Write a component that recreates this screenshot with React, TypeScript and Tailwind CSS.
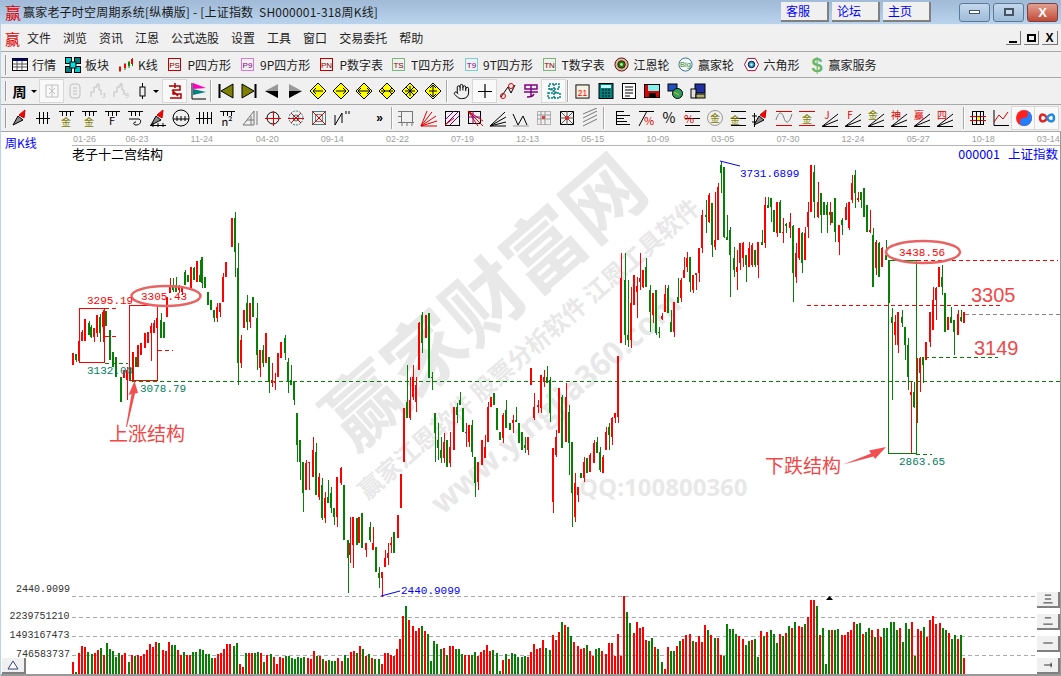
import type { ReactNode } from "react";
import { Hand } from "lucide-react";

const RED = "#ff0000";
const GREEN = "#058005";

/* candle rows copied off the 3x crops: [x, high, top, bottom, low, isRed] */
type C = number[];
const segA: C[] = [
  [216,580,580,614,614,1],[225,582,582,600,606,0],[234,543,543,604,604,1],[243,510,515,543,543,1],[252,478,478,543,543,1],[264,484,490,525,525,0],[270,495,500,530,535,0],[279,503,503,530,545,1],[288,465,465,520,532,1],[297,463,470,520,545,0],[306,450,455,500,545,1],[315,452,452,498,498,0],[327,510,510,600,600,0],[336,575,575,620,620,0],[345,590,590,650,650,0],[360,650,650,725,725,0],[369,630,630,655,655,1],[378,620,630,660,720,1],[387,625,630,660,662,0],
  [396,577,577,660,660,1],[405,590,590,620,620,0],[411,555,555,622,622,1],[420,550,550,585,585,1],[432,520,520,565,565,1],[441,515,515,550,550,1],[450,490,497,520,604,1],[459,480,490,520,520,1],[468,470,475,505,540,1],[480,458,480,535,535,0],[489,485,485,535,535,0],[498,410,410,472,472,1],[507,355,375,400,400,1],[516,355,375,390,395,0],[525,350,375,395,395,0],[534,375,380,390,400,1],[543,380,380,395,405,1],[552,330,335,375,375,0],[561,345,345,365,365,0],[570,320,320,385,385,1],[579,320,325,360,360,0],[588,303,303,365,365,1],[597,300,345,365,365,0],[603,292,292,370,385,0],[612,350,350,385,385,0],[621,395,395,435,435,0],[630,420,420,450,450,0],[639,450,450,475,485,0],[648,430,440,475,485,1],[657,430,430,455,470,1],
  [666,340,350,425,425,1],[675,305,305,350,350,1],
];
const segB: C[] = [
  [3,55,55,140,140,1],[12,35,55,155,230,0],[21,130,205,490,555,0],[30,405,420,490,505,1],[39,330,330,385,385,1],[48,285,310,365,390,0],[57,310,310,365,385,1],[66,290,290,350,350,0],[78,310,355,465,510,0],[87,450,450,505,530,1],[96,435,450,490,500,0],[105,400,400,490,490,1],[114,470,470,545,580,0],[123,490,540,550,560,1],[132,520,545,550,570,1],[141,460,460,530,530,1],[150,425,425,475,475,1],[162,405,415,460,480,0],[171,475,485,545,580,0],[180,495,540,555,555,0],[190,545,545,600,615,0],
  [198,640,640,735,785,0],[207,720,720,785,840,0],[216,785,785,880,935,0],[225,780,790,870,870,1],[234,785,785,790,870,1],[246,710,750,830,830,1],[255,730,755,885,885,0],[264,820,830,890,900,1],[273,835,855,955,960,0],[282,875,895,955,970,1],[291,840,890,910,910,0],[300,860,880,925,940,0],[309,925,925,950,975,0],[318,830,830,950,980,1],[330,800,805,850,855,1],[340,855,855,1020,1020,0],[351,1020,1020,1075,1180,0],[357,950,1030,1065,1090,1],[366,950,950,1035,1105,1],[378,955,955,1035,1035,0],[384,950,950,1030,1030,1],[393,940,940,1045,1045,0],[405,1030,1030,1050,1070,1],[417,965,980,1020,1025,0],[426,980,1030,1050,1050,1],[435,1040,1040,1115,1115,0],[444,1100,1120,1135,1165,0],[453,1115,1115,1135,1190,1],[462,1050,1075,1100,1100,1],[471,1030,1060,1075,1095,1],[480,1010,1030,1035,1060,1],[489,995,995,1060,1060,0],[501,945,945,1015,1015,1],[510,822,822,925,925,1],[519,625,625,785,785,1],[528,495,605,655,655,0],[537,530,600,655,660,1],[546,495,530,590,600,1],[555,530,555,605,635,1],[564,365,370,510,510,1],[573,335,345,430,460,0],[585,345,345,415,415,1],[594,340,340,535,535,0],[603,515,530,535,570,0],
  [612,640,640,700,785,0],[621,670,720,745,780,0],[630,710,750,775,790,0],[639,700,725,775,790,1],[648,720,720,800,800,0],[657,695,740,790,800,1],[668,620,620,750,750,1],[678,610,620,645,670,0],[687,575,600,615,615,0],[696,625,625,695,695,0],[705,670,695,700,740,1],[714,675,675,725,740,1],[723,660,675,755,770,0],[732,770,770,850,890,0],[741,785,785,845,870,1],[753,720,720,795,795,1],[762,705,740,775,775,1],[771,605,620,725,725,1],[780,590,590,620,620,1],[789,580,580,615,615,0],[798,625,625,690,690,0],[807,695,695,720,720,0],[816,640,645,715,730,1],[825,600,630,685,685,0],[837,670,670,690,690,0],[846,645,660,670,700,1],[856,620,660,665,665,0],[864,670,670,730,730,0],[873,695,695,750,750,0],[882,710,735,745,760,0],[891,710,710,750,765,1],
];
const segC: C[] = [
  [0,655,655,705,705,1],[9,730,770,805,810,1],[20,750,765,770,790,1],[29,675,675,775,790,1],[38,660,680,695,710,1],[48,648,680,700,700,0],[57,680,690,790,815,0],[66,895,895,1055,1090,1],[75,840,860,915,920,1],[84,715,715,850,850,1],[93,735,740,895,895,0],[105,700,740,875,875,1],[114,765,785,880,975,0],[123,875,875,1030,1130,0],[132,970,1000,1100,1115,1],[141,1010,1010,1035,1055,1],[150,968,968,985,985,0],[159,920,935,985,995,1],[168,925,925,970,970,0],[177,910,915,965,965,1],[189,870,880,940,940,1],[198,860,875,910,910,0],[207,890,905,960,965,0],[216,915,920,970,970,1],[225,830,845,900,900,1],[234,820,830,855,900,0],[243,800,805,860,885,1],[252,790,790,805,820,1],[261,618,618,800,820,1],
  [271,310,385,580,580,1],[282,310,390,555,585,0],[291,390,555,570,590,0],[300,410,460,570,595,1],[309,375,375,465,465,1],[318,380,408,425,505,1],[327,310,385,395,420,1],[336,360,360,410,415,1],[345,325,350,410,410,0],[357,405,420,485,545,0],[366,430,430,495,520,1],[375,420,420,550,555,0],[384,530,545,550,565,0],[393,490,497,507,510,1],[402,405,432,485,485,1],[411,405,415,490,490,0],[420,480,515,545,545,0],[429,455,455,545,560,1],[441,385,440,460,460,0],[450,385,390,445,455,1],[459,320,360,385,385,1],[468,305,325,350,365,1],[477,320,320,395,425,0],[486,375,375,420,430,1],[495,370,370,375,420,1],[504,295,295,370,395,1],[513,180,195,295,310,1],[525,150,195,200,250,0],[534,130,135,215,220,1],[543,160,160,285,320,0],[552,125,270,290,300,1],[561,100,110,270,270,1],[570,35,45,70,130,0],[579,50,50,260,265,0],[588,195,260,270,270,0],[597,230,240,315,440,0],[609,290,325,360,380,0],[618,300,350,365,420,1],[627,280,280,340,360,1],[636,275,280,325,350,1],[645,315,315,345,395,0],[654,275,295,350,350,1],[663,280,285,345,350,1],[672,300,300,345,350,0],[681,275,275,345,385,1],[693,240,275,285,285,0],[702,140,165,280,295,1],[711,140,165,175,175,0],[720,145,145,170,215,0],[729,180,180,245,245,0],[738,155,155,250,260,1],[747,150,155,250,250,0],[756,205,245,250,280,1],[765,220,222,228,250,0],[777,190,215,235,265,1],[786,225,228,370,455,0],[795,280,310,380,400,1],[804,235,235,325,330,1],[813,245,250,340,370,0],[822,230,250,330,330,1],
  [831,155,185,230,265,1],[840,45,45,185,185,1],[849,45,65,155,205,0],[861,95,155,200,205,1],[870,130,130,195,250,0],[879,155,155,195,195,0],[888,155,165,195,250,0],[897,155,185,195,225,1],
];
const segD: C[] = [
  [213,155,155,190,190,0],[222,115,115,215,245,0],[234,195,195,245,285,1],[243,175,180,195,225,0],[255,130,140,180,180,1],[264,125,125,205,210,1],[273,45,70,120,130,1],[282,30,45,100,145,0],[291,95,115,120,125,1],[300,95,95,120,145,0],[309,85,85,170,170,0],[318,135,135,215,215,0],[327,150,210,215,220,1],[336,205,225,380,380,0],[345,240,245,325,345,1],[354,245,250,350,350,0],[363,260,265,320,320,1],[375,240,285,300,300,0],
  [384,300,300,428,428,0],[393,445,470,490,720,0],[402,465,485,525,555,1],[411,455,455,555,580,1],[423,450,470,490,500,0],[432,500,500,555,600,0],[441,535,555,650,690,0],[450,665,695,705,880,1],[459,665,695,740,745,0],[468,595,660,755,790,1],[477,590,595,640,695,1],[486,590,590,615,670,0],[495,545,545,600,600,1],[507,455,455,545,560,1],[516,380,420,510,510,1],[525,380,385,420,480,1],[534,320,320,380,380,1],[543,315,350,380,405,0],[552,400,400,515,515,0],[561,470,470,510,510,1],[570,440,470,490,490,0],[579,480,480,515,585,0],[591,450,462,525,525,1],[600,450,470,482,485,0],[609,455,455,490,490,1],
];
const segs: [number, number, C[]][] = [[0, 160, segA], [230, 200, segB], [530, 150, segC], [760, 160, segD]];

/* volume bars, height in px, negative = green */
const vol1 = [12,-2,21,28,27,-22,-20,21,24,-26,19,-31,-25,-23,-17,-21,19,21,-12,19,-18,19,18,20,24,30,27,32,-31,24,23,32,-29,-29,24,19,-22,19,19,-22,-22,-25,-24,-20,-20,-16,16,20,21,25,30,30,-28,-31,10,7,-21,21,21,-21,-22,21,-12,19,-20,17,10,17,16,-18,-18,-16,-15,-17,-16,-17,16,15,23,-18,18,-15,13,-14,-13,-13,16,13,-19,-16,22,23,-21,28,-25,18,-20,16,-15,-15,10,21,21,19,18];
const vol2 = [25,35,58,-68,54,48,43,46,-48,43,-40,-13,-33,-30,-25,26,-19,28,28,-25,-25,-20,19,19,-19,-22,18,22,24,29,23,-24,-21,-3,14,-20,15,-21,-20,-17,-17,-18,17,22,30,25,26,34,-26,-24,39,34,42,-52,49,-47,-38,32,28,25,26,-29,23,18,-25,-26,23,20,31,31,18,40,18,78,-62,-51,41,52,46,47,34,-33,-36,27,-25,-12,5,27,-23,-23,28,-33,35,39,40,-33,32,38,32,49,-44,39,-36,36,19,-18,-50,-45,-45,-40,38,35,-29,-33,34,-35,-17,43,-38,42,-44,-40,-31,40,-38,41,-48,46,-52,48,47,-50,57,74];
const vol3 = [74,-68,39,-46,-10,-44,44,-44,-45,39,39,42,44,52,-50,-51,40,-42,-46,44,-37,45,37,-46,-46,-52,-52,-44,46,-32,-51,-45,52,-18,45,43,-47,37,54,58,50,51,-46,-44,41,-35,-39,35,-39,16];
const volSegs: [number, number, number[]][] = [[72, 393, vol1], [396, 810, vol2], [813, 963, vol3]];

const dates = ["06-23","11-24","04-20","09-14","02-22","07-19","12-13","05-15","10-09","03-05","07-30","12-24","05-27","10-18"];

function Chart() {
  return (
    <svg viewBox="0 132 1061 544" className="absolute inset-0 w-[1061px] h-[544px]" shapeRendering="crispEdges">
      {/* guide lines */}
      <g fill="none" strokeDasharray="4 3">
        <path d="M132 381.5H1061M925 357.5H998M105 363.5H128M916 454.5H932" stroke={GREEN} />
        <path d="M917 260.5H1058M807 305.5H1000M105 308.5H119M105 336.5H119M158 350.5H173" stroke={RED} />
        <path d="M965 314.5H1061" stroke="#888888" />
        <path d="M72 596.5H1035M72 617.5H1035M72 636.5H1035M72 655.5H1035" stroke="#aaaaaa" />
      </g>
      {segs.map(([ox, oy, rows]) =>
        rows.map(([x, hi, top, bot, lo, up]) => {
          const px = Math.round(ox + x / 3);
          const c = up ? RED : GREEN;
          return (
            <g key={`${ox}-${x}`} fill={c}>
              <rect x={px + 1} y={oy + hi / 3} width={1} height={(lo - hi) / 3} />
              <rect x={px} y={oy + top / 3} width={2} height={Math.max(1, (bot - top) / 3)} />
            </g>
          );
        })
      )}
      {volSegs.map(([from, to, bars]) =>
        bars.map((h, i) => (
          <rect key={`${from}-${i}`} x={Math.round(from + (i * (to - from)) / (bars.length - 1))} y={674 - Math.abs(h)} width={2} height={Math.abs(h)} fill={h > 0 ? RED : GREEN} />
        ))
      )}
      {/* structure boxes */}
      <g fill="none">
        <rect x="79.5" y="308.5" width="25" height="54" stroke={RED} />
        <rect x="129.5" y="305.5" width="28" height="75" stroke={RED} />
        <rect x="888.5" y="260.5" width="28" height="193" stroke={GREEN} />
      </g>
      <g shapeRendering="auto">
        <ellipse cx="166" cy="296" rx="34.5" ry="10" fill="none" stroke="#e86464" strokeWidth="2.5" />
        <ellipse cx="923" cy="252" rx="37" ry="11" fill="none" stroke="#e86464" strokeWidth="2.5" />
        <path d="M126 427L131.5 394L128.5 395L134.5 381L138 393L135 393.5L127 427Z" fill="#f25050" />
        <path d="M843 464.500L871 453.500L869 450.500L886 447L875 459L873.500 456.500Z" fill="#f25050" />
        <path d="M720 161L740 166" stroke="#0000ff" fill="none" />
        <path d="M381 596L400 591" stroke="#0000ff" fill="none" />
        <path d="M826 600L829.500 596L833 600Z" fill="#000" />
      </g>
      {/* chart labels */}
      <g fontFamily="'Liberation Mono', monospace" fontSize="11" shapeRendering="auto">
        <text x="87" y="304" fill={RED}>3295.19</text>
        <text x="141" y="300" fill={RED}>3305.43</text>
        <text x="87" y="374" fill="#008060">3132.00</text>
        <text x="140" y="392" fill="#008060">3078.79</text>
        <text x="899" y="256" fill={RED}>3438.56</text>
        <text x="899" y="465" fill="#008060">2863.65</text>
        <text x="740" y="177" fill="#0000ff">3731.6899</text>
        <text x="401" y="594" fill="#0000ff">2440.9099</text>
      </g>
      <g fontFamily="'Liberation Sans', sans-serif" fontSize="20" fill="#f04848" shapeRendering="auto">
        <text x="971" y="302">3305</text>
        <text x="974" y="355">3149</text>
      </g>
      <g fontFamily="'Noto Sans CJK SC', sans-serif" fontSize="19" fill="#f04848" shapeRendering="auto">
        <text x="109" y="441">上涨结构</text>
        <text x="765" y="473">下跌结构</text>
      </g>
    </svg>
  );
}

function Watermark() {
  return (
    <div className="absolute inset-0 overflow-hidden text-[#e8e8e8] font-bold select-none">
      <div className="absolute left-[260px] top-[118px] w-[440px] h-[94px] flex items-center justify-center whitespace-nowrap text-[79px] leading-none -rotate-[41deg] font-['Noto_Sans_CJK_SC']">
        赢家财富网
      </div>
      <div className="absolute left-[228px] top-[200px] w-[600px] h-[32px] flex items-center justify-center whitespace-pre text-[24px] leading-none -rotate-[41deg] font-['Noto_Sans_CJK_SC']">
        赢家江恩软件 股票分析软件 江恩工具软件
      </div>
      <div className="absolute left-[355px] top-[250px] w-[400px] h-[40px] flex items-center justify-center whitespace-nowrap text-[31px] leading-none -rotate-[41deg] font-['Open_Sans']">
        www.yingjia360.com
      </div>
      <div className="absolute left-[579px] top-[341px] whitespace-nowrap text-[24px] leading-[28px] font-['Open_Sans']">
        QQ:100800360
      </div>
    </div>
  );
}

/* ---- toolbar icons ---- */
const Svg = ({ children }: { children: ReactNode }) => (
  <svg viewBox="0 0 20 20" className="w-5 h-5" fill="none" stroke="#000">{children}</svg>
);
const L = ({ d, c = "#000" }: { d: string; c?: string }) => <path d={d} stroke={c} />;
const G = ({ t, x = 10, y = 15, c = "#000", s = 10 }: { t: string; x?: number; y?: number; c?: string; s?: number }) => (
  <text x={x} y={y} fill={c} stroke="none" fontSize={s} textAnchor="middle" fontFamily="'Noto Sans CJK SC', sans-serif">{t}</text>
);

const comb = "M3 3.5H18M6.500 3.500V8M10.500 3.500V8M14.500 3.500V8";
const fan = "M2 18.500H18M2 18.500L18 12M2 18.500L18 6";
const three = "M3 3.500H18M3 10.500H18M3 17.500H18";

const Flame = () => (
  <>
    <path d="M3 17L8 8L13 12Z" fill="#888" stroke="#000" />
    <path d="M9 7L15 2L14 10Z" fill="#ff0000" stroke="#c00" />
  </>
);
const Sq = ({ a, b, c }: { a: string; b: string; c: string }) => (
  <>
    <rect x="3.500" y="3.500" width="13" height="13" stroke={a} />
    <path d="M3.500 3.500L16.500 16.500M16.500 3.500L3.500 16.500M10 3V17M3 10H17" stroke={b} />
    <rect x="8" y="8" width="4" height="4" fill={c} stroke="none" />
  </>
);
const Diamond = ({ d }: { d: string }) => (
  <>
    <path d="M10 2L18 10L10 18L2 10Z" fill="#ffff00" stroke="#000" />
    <path d={d} stroke="#000" />
  </>
);
const Fan = ({ t, c }: { t: string; c: string }) => (
  <>
    <L d={fan} />
    <G t={t} x={7} y={11} c={c} s={10} />
  </>
);

const Btn = ({ children, on, w = "w-[23px]" }: { children?: ReactNode; on?: boolean; w?: string }) => (
  <div className={`${w} h-[22px] shrink-0 flex items-center justify-center ${on ? "bg-[#f9f9f9] outline outline-1 outline-[#d8d8d8]" : ""}`}>
    {children}
  </div>
);
const Grip = () => <div className="w-[2px] h-[20px] shrink-0 border-l border-[#9a9a9a] bg-white/60" />;
const Sep = ({ className }: { className: string }) => <div className={`w-[2px] h-[22px] shrink-0 bg-[#a8a8a8] border-r border-white ${className}`} />;

function TagIcon({ t, c, dotted }: { t: string; c: string; dotted?: boolean }) {
  return (
    <svg viewBox="0 0 13 13" className="w-[13px] h-[13px]" fill="none">
      <rect x="0.500" y="0.500" width="12" height="12" stroke={c} strokeDasharray={dotted ? "1 1" : undefined} />
      <text x="6.500" y="9.500" fontSize="8" fontFamily="'Liberation Sans', sans-serif" textAnchor="middle" fill={dotted && c !== "#008000" ? "#800080" : "#800000"}>{t}</text>
    </svg>
  );
}

const Calendar = () => <svg viewBox="0 0 16 15" className="w-[15px] h-[15px]"><rect x="1" y="0.500" width="14" height="14" fill="#f5f0e0" stroke="#000" /><text x="8" y="12.500" fontSize="9" textAnchor="middle" fill="#ff0000" fontFamily="'Liberation Sans', sans-serif">21</text></svg>;

const mainTools: { w: string; iw: string; icon: ReactNode; label: string }[] = [
  { w: "w-[53px]", iw: "w-[20px]", label: "行情", icon: <svg viewBox="0 0 16 13" className="w-4 h-[13px]"><rect x="0.500" y="0.500" width="15" height="12" fill="#fff" stroke="#000" /><rect x="1" y="1" width="14" height="2" fill="#000080" /><path d="M1 6H15M1 9H15M5 3V12M10 3V12" stroke="#555" /></svg> },
  { w: "w-[53px]", iw: "w-[20px]", label: "板块", icon: <svg viewBox="0 0 16 16" className="w-4 h-4">{[[0,0],[9,0],[0,9],[9,9]].map(([x, y]) => <rect key={`${x}${y}`} x={x + 0.5} y={y + 0.5} width="6" height="6" fill={x === y ? "#00c8c8" : "#008080"} stroke="#000" />)}<rect x="5" y="5" width="6" height="6" fill="#00e0e0" stroke="#000" /></svg> },
  { w: "w-[50px]", iw: "w-[20px]", label: "K线", icon: <svg viewBox="0 0 16 16" className="w-4 h-4"><path d="M2 9V15M7 6V13M11 4V11M14.500 1V9" stroke="#008000" /><rect x="1" y="10" width="2" height="4" fill="#f00" /><rect x="6" y="7" width="2" height="4" fill="#f00" /><rect x="10" y="5" width="2" height="4" fill="#080" /><rect x="13" y="2" width="2" height="5" fill="#f00" /></svg> },
  { w: "w-[73px]", iw: "w-[19.500px]", label: "P四方形", icon: <TagIcon t="PS" c="#c00000" /> },
  { w: "w-[79px]", iw: "w-[19px]", label: "9P四方形", icon: <TagIcon t="P9" c="#c000c0" dotted /> },
  { w: "w-[72px]", iw: "w-[19.500px]", label: "P数字表", icon: <TagIcon t="PN" c="#c00000" /> },
  { w: "w-[72.500px]", iw: "w-[19px]", label: "T四方形", icon: <TagIcon t="TS" c="#008000" dotted /> },
  { w: "w-[78px]", iw: "w-[18.500px]", label: "9T四方形", icon: <TagIcon t="T9" c="#00b0b0" dotted /> },
  { w: "w-[71px]", iw: "w-[19px]", label: "T数字表", icon: <TagIcon t="TN" c="#008000" dotted /> },
  { w: "w-[64.500px]", iw: "w-[20px]", label: "江恩轮", icon: <svg viewBox="0 0 16 16" className="w-[15px] h-[15px]"><circle cx="8" cy="8" r="7" fill="#c8c0a8" stroke="#600" /><circle cx="8" cy="8" r="4" fill="#080" stroke="#800000" /><circle cx="8" cy="8" r="1.500" fill="#e0d0d0" /></svg> },
  { w: "w-[65.500px]", iw: "w-[20px]", label: "赢家轮", icon: <svg viewBox="0 0 16 16" className="w-[15px] h-[15px]"><circle cx="8" cy="8" r="7" fill="#f0f8f8" stroke="#307090" /><text x="8" y="11" textAnchor="middle" fontSize="8" fill="#308030" fontFamily="'Liberation Sans', sans-serif">Big</text></svg> },
  { w: "w-[68px]", iw: "w-[20px]", label: "六角形", icon: <svg viewBox="0 0 16 16" className="w-[15px] h-[15px]"><path d="M4 1.500H12L15.500 8L12 14.500H4L0.500 8Z" fill="#fff" stroke="#a00030" /><circle cx="8" cy="8" r="3.500" fill="#30a0a0" stroke="#000080" /><circle cx="8" cy="8" r="1.200" fill="#fff" /></svg> },
  { w: "w-[70px]", iw: "w-[17px]", label: "赢家服务", icon: <span className="text-[20px] leading-none font-bold text-[#68b868] font-['Liberation_Sans']">$</span> },
];

function App() {
  return (
    <div className="relative w-[1061px] h-[676px] overflow-hidden flex flex-col bg-white font-['Noto_Sans_CJK_SC','Liberation_Sans',sans-serif] text-[12px] text-[#222]">
      {/* title bar */}
      <div className="h-[24px] shrink-0 flex items-center bg-linear-to-b from-[#a0bad7] to-[#bad3ed]">
        <span className="ml-[5px] w-[18px] text-[16px] leading-none text-[#e00000]">赢</span>
        <span className="whitespace-pre tracking-[0.2px] text-[#1a1a1a]">赢家老子时空周期系统[纵横版] - [上证指数  SH000001-318周K线]</span>
        <div className="ml-auto flex gap-[3px] text-[12px] text-[#0000ff] mr-[28px]">
          {["客服", "论坛", "主页"].map((t) => (
            <div key={t} className="w-[48px] h-[20px] pl-[5px] bg-[#f0f0f0] border-r-2 border-b-2 border-[#808080] flex items-center">{t}</div>
          ))}
        </div>
        <div className="mr-[3px] flex gap-[3px] items-center">
          <div className="w-[31px] h-[19px] rounded-[3px] border border-[#5a7a9a] bg-linear-to-b from-[#c4d8ec] to-[#9fbbd8] flex items-center justify-center"><div className="w-[11px] h-[4px] bg-white border border-[#456]" /></div>
          <div className="w-[31px] h-[19px] rounded-[3px] border border-[#5a7a9a] bg-linear-to-b from-[#c4d8ec] to-[#9fbbd8] flex items-center justify-center"><div className="w-[10px] h-[8px] bg-white/30 border-2 border-[#456]" /></div>
          <div className="w-[31px] h-[19px] rounded-[3px] border border-[#7a4040] bg-linear-to-b from-[#e2a090] to-[#c04838] flex items-center justify-center text-white font-bold text-[13px] leading-none font-['Liberation_Sans']">X</div>
        </div>
      </div>

      {/* menu bar */}
      <div className="h-[28px] shrink-0 border-t border-[#e8eef5] border-b border-b-[#a8a8a8] bg-[#f0f0f0] flex items-center">
        <span className="ml-[5px] w-[22px] text-[15px] leading-none text-[#e00000]">赢</span>
        <div className="flex gap-[12px]">
          {["文件", "浏览", "资讯", "江恩", "公式选股", "设置", "工具", "窗口", "交易委托", "帮助"].map((m) => (
            <span key={m}>{m}</span>
          ))}
        </div>
        <div className="ml-auto mr-[3px] flex items-center gap-[3px] text-black font-bold leading-none font-['Liberation_Sans']">
          <div className="w-[15px] h-[14px] border-r border-b border-[#777] flex items-end justify-center pb-[1px]"><div className="w-[8px] h-[2px] bg-black" /></div>
          <div className="w-[15px] h-[14px] border-r border-b border-[#777] flex items-center justify-center"><div className="w-[9px] h-[8px] border-2 border-black" /></div>
          <div className="w-[16px] h-[14px] border-r border-b border-[#777] flex items-center justify-center text-[12px]">X</div>
        </div>
      </div>

      {/* main toolbar */}
      <div className="h-[26px] shrink-0 border-b border-[#a8a8a8] bg-[#f0f0f0] flex items-center">
        <div className="ml-[5px] mr-[5px]"><Grip /></div>
        {mainTools.map((t) => (
          <div key={t.label} className={`${t.w} shrink-0 flex items-center whitespace-nowrap`}>
            <div className={`${t.iw} shrink-0 flex items-center`}>{t.icon}</div>
            <span>{t.label}</span>
          </div>
        ))}
      </div>

      {/* toolbar: periods, paging, drawing */}
      <div className="h-[27px] shrink-0 border-b border-[#a8a8a8] bg-[#f0f0f0] flex items-center">
        <div className="ml-[5px] mr-[2px]"><Grip /></div>
        <div className="w-[21px] shrink-0 text-center text-[14px] font-bold leading-none text-black">周</div>
        <div className="w-0 h-0 ml-[1px] mr-[3px] border-x-[3px] border-x-transparent border-t-[3px] border-t-black" />
        <Btn on><Svg><path d="M4 4H16V16H4ZM7 7L13 13M13 7L7 13M10 4V16" stroke="#c0c0c0" /></Svg></Btn>
        <Btn><Svg><rect x="5" y="3" width="10" height="14" rx="3" stroke="#c0c0c0" /><path d="M8 7H12M8 10H12M8 13H12" stroke="#c0c0c0" /></Svg></Btn>
        <Btn><Svg><path d="M3 16V11H6V6H9V3H11V9H13V14" stroke="#c0c0c0" /><G t="3" x={16} y={17} c="#c0c0c0" s={7} /></Svg></Btn>
        <Btn><Svg><path d="M3 16V11H6V6H9V3H11V9H13V14" stroke="#c0c0c0" /><G t="9" x={16} y={17} c="#c0c0c0" s={7} /></Svg></Btn>
        <Btn w="w-[20px]"><Svg><rect x="8" y="6" width="5" height="9" /><path d="M10.500 2V6M10.500 15V18" /></Svg></Btn>
        <div className="w-0 h-0 ml-[1px] mr-[4px] border-x-[3px] border-x-transparent border-t-[3px] border-t-black" />
        <Btn on><Svg><path d="M4 5H15V9H8V13H16V17H5M10 2V7M7 9L13 15" stroke="#b00000" strokeWidth="1.500" /></Svg></Btn>
        <Btn><Svg><path d="M4 2V18H18" stroke="#000" /><path d="M5 2L18 7L5 8Z" fill="#ff00c0" stroke="none" /><path d="M5 8L18 11L5 14Z" fill="#008080" stroke="none" /></Svg></Btn>
        <Sep className="ml-[1px] mr-[2px]" />
        <Btn><Svg><path d="M3.500 3V17" strokeWidth="2" /><path d="M17 3V17L5 10Z" fill="#808000" /></Svg></Btn>
        <Btn><Svg><path d="M16.500 3V17" strokeWidth="2" /><path d="M3 3V17L15 10Z" fill="#808000" /></Svg></Btn>
        <Btn><Svg><path d="M16 3L3 10L16 17Z" fill="#999" stroke="none" /><path d="M3 10L16 10V17Z" fill="#000" stroke="none" /></Svg></Btn>
        <Btn><Svg><path d="M4 3L17 10L4 17Z" fill="#999" stroke="none" /><path d="M17 10L4 10V17Z" fill="#000" stroke="none" /></Svg></Btn>
        <Btn><Svg><Diamond d="M5 10H15M5 10L8 7M5 10L8 13" /></Svg></Btn>
        <Btn><Svg><Diamond d="M5 10H15M15 10L12 7M15 10L12 13" /></Svg></Btn>
        <Btn><Svg><Diamond d="M4 10H16M4 10L7 7M4 10L7 13M16 10L13 7M16 10L13 13" /></Svg></Btn>
        <Btn><Svg><Diamond d="M4 10H16M8 10L5 7M8 10L5 13M12 10L15 7M12 10L15 13" /></Svg></Btn>
        <Btn><Svg><Diamond d="M5 10H15M10 5V15M6 6L14 14M14 6L6 14" /></Svg></Btn>
        <Btn><Svg><Diamond d="M10 4V16M10 4L7 7M10 4L13 7M10 16L7 13M10 16L13 13M6 10H14" /></Svg></Btn>
        <Sep className="mx-[2px]" />
        <Btn><Hand size={17} strokeWidth={1.4} color="#000" /></Btn>
        <Btn on><Svg><path d="M10 3V17M3 10.500H17" strokeWidth="1.200" /></Svg></Btn>
        <Btn><Svg><path d="M3 16L10 6L13 12L17 4" stroke="#000" /><circle cx="5" cy="15" r="2.500" stroke="#e00000" /><circle cx="13" cy="5" r="2.500" stroke="#e00000" /></Svg></Btn>
        <Btn><Svg><path d="M4 4H16V8H4ZM10 4V16M6 16C8 16 12 16 13 13M3 11H17" stroke="#800080" strokeWidth="1.500" /></Svg></Btn>
        <Btn on><Svg><path d="M5 3H15V8H5ZM4 12H16V17H4ZM10 3V17M6 8L13 12" stroke="#008080" strokeWidth="1.500" strokeDasharray="2 1" /></Svg></Btn>
        <Sep className="mx-[2px]" />
        <Btn><Calendar /></Btn>
        <Btn><svg viewBox="0 0 16 16" className="w-4 h-4"><rect x="1" y="0.500" width="14" height="15" fill="#007f7f" stroke="#000" /><rect x="3" y="2" width="10" height="3" fill="#c0ffff" /><path d="M4 7H6M7 7H9M10 7H12M4 10H6M7 10H9M10 10H12M4 13H6M7 13H9M10 13H12" stroke="#000" /></svg></Btn>
        <Btn><svg viewBox="0 0 16 16" className="w-4 h-4"><rect x="1.500" y="0.500" width="13" height="15" fill="#fff" stroke="#000" /><path d="M4 4H12M4 7H12M4 10H12M4 13H9" stroke="#000" /></svg></Btn>
        <Btn><svg viewBox="0 0 16 16" className="w-4 h-4"><rect x="0.500" y="1.500" width="15" height="13" fill="#e00000" stroke="#000" /><rect x="4" y="2" width="11" height="6" fill="#80f0f0" /><rect x="5" y="10" width="7" height="4" fill="#000" /></svg></Btn>
        <Btn><svg viewBox="0 0 16 16" className="w-4 h-4"><rect x="1" y="1" width="9" height="7" fill="#2050c0" stroke="#000" /><circle cx="10.500" cy="10.500" r="5" fill="#30a060" stroke="#000" /><path d="M7 9L12 12" stroke="#e0c000" /></svg></Btn>
        <Btn><svg viewBox="0 0 16 16" className="w-4 h-4"><rect x="5" y="1" width="10" height="9" fill="#2030a0" stroke="#000" /><rect x="1" y="6" width="5" height="9" fill="#e0e0e0" stroke="#000" /><rect x="6" y="11" width="9" height="4" fill="#b0b070" stroke="#000" /></svg></Btn>
      </div>

      {/* toolbar: gann tools */}
      <div className="h-[27px] shrink-0 border-b border-[#a8a8a8] bg-[#f0f0f0] flex items-center">
        <div className="ml-[5px] mr-[1px]"><Grip /></div>
        <Btn><Svg><Flame /></Svg></Btn>
        <Btn><Svg><L d="M3 10.500H17M6.500 4V16M10.500 4V16M14.500 4V16" /></Svg></Btn>
        <Btn><Svg><L d={comb} /><G t="金" y={18} c="#808000" /></Svg></Btn>
        <Btn><Svg><L d={comb} /><G t="金" y={18} c="#808000" /></Svg></Btn>
        <Btn><Svg><L d={comb} /><G t="F" y={17} s={11} /></Svg></Btn>
        <Btn><Svg><L d={comb} /><path d="M4 11H14C17 12 16 17 11 17C8 17 8 14 11 14" /></Svg></Btn>
        <Btn><Svg><Flame /><L d="M2 17.500H18M5 15V19M10 15V19M15 15V19" /></Svg></Btn>
        <Btn><Svg><circle cx="10" cy="10" r="8" /><L d="M2 11H18M6 8V13M10 8V13M14 8V13" /></Svg></Btn>
        <Btn><Svg><L d="M2 10.500H18M5.500 4V16M9.500 4V16M13.500 4V16M17.500 4V16" /></Svg></Btn>
        <Btn><Svg><L d={comb} /><G t="n²" y={18} s={11} /></Svg></Btn>
        <Btn><Svg><path d="M3 17L14 3V17ZM17 3V17M7 12H14M11 8V17" stroke="#777" /></Svg></Btn>
        <Btn><Svg><circle cx="10" cy="10" r="6" /><L d="M2 10.500H18M10.500 3V18" c="#e00000" /></Svg></Btn>
        <Btn><Svg><circle cx="10" cy="10" r="7" stroke="#408080" strokeDasharray="2 1" /><circle cx="10" cy="10" r="3" stroke="#408080" /><L d="M2 10.500H18M5 5L15 15M15 5L5 15" c="#e00000" /></Svg></Btn>
        <Btn><Svg><rect x="3.500" y="3.500" width="13" height="13" stroke="#408080" /><rect x="6.500" y="6.500" width="7" height="7" stroke="#808080" /><L d="M3 3L17 17M17 3L3 17" c="#e00000" /></Svg></Btn>
        <Btn><Svg><L d="M3 17V7M3 17L10 5M10 15V5M14 3V6M17 3V6" /></Svg></Btn>
        <div className="w-[30px] shrink-0 text-right text-[12px] font-bold leading-none text-black font-['Liberation_Sans']">»</div>
        <Sep className="ml-[8px] mr-[1px]" />
        <Btn><Svg><rect x="5.500" y="3.500" width="11" height="11" stroke="#777" /><L d="M2 3.500H6M2 8.500H6M2 14.500H18M6 14V18M11 14V18M16 14V18" c="#777" /></Svg></Btn>
        <Btn><Svg><L d="M2 18L8 3M2 18L13 4M2 18L17 8M2 18L18 13M2 18H18" c="#e00000" /></Svg></Btn>
        <Btn><Svg><rect x="3.500" y="3.500" width="14" height="14" /><L d="M3 17L17 3M3 12L12 3M8 17L17 8" c="#800080" /><L d="M3 17L12 10" c="#e00000" /></Svg></Btn>
        <Btn><Svg><rect x="3.500" y="3.500" width="12" height="12" /><L d="M3 3L18 18M3 3L13 18M3 3L18 13" c="#e00000" /><L d="M8 3L8 16M3 9H16" c="#800080" /></Svg></Btn>
        <Btn><Svg><L d="M2 18L17 4M2 18L18 9M2 18L18 14M2 18H18" /></Svg></Btn>
        <Btn><Svg><L d="M2 6L7 17L12 8L16 17" /><L d="M2 18H18" c="#999" /></Svg></Btn>
        <Btn><Svg><rect x="3.500" y="3.500" width="13" height="13" stroke="#777" strokeDasharray="1 1" /><path d="M7 3V17M11 3V17M3 7H17M3 11H17" stroke="#999" /><rect x="8" y="8" width="3" height="3" fill="#e04040" stroke="none" /></Svg></Btn>
        <Btn><Svg><Sq a="#000" b="#555" c="#d03030" /></Svg></Btn>
        <Btn><Svg><L d="M3 10L17 3M3 14L17 7M3 18L17 11M3 6L17 0" c="#777" /></Svg></Btn>
        <Sep className="ml-[2px] mr-[6px]" />
        <Btn><Svg><L d="M3.500 3V17M3 3.500H11M3 7.500H17M3 10.500H11M3 13.500H14M3 16.500H17" /></Svg></Btn>
        <Btn><Svg><L d="M3 3.500H18M3 18L11 3" /><G t="%" x={13} y={17} c="#e00000" s={11} /></Svg></Btn>
        <Btn><Svg><G t="%" y={15} s={14} /></Svg></Btn>
        <Btn><Svg><L d={three} /><G t="%" x={7} y={15} c="#e00000" s={11} /></Svg></Btn>
        <Btn><Svg><circle cx="10" cy="10" r="7.500" stroke="#999" /><G t="金" y={14} c="#808000" /></Svg></Btn>
        <Btn><Svg><L d={three} /><G t="金" x={7} y={16} c="#808000" /></Svg></Btn>
        <Btn><Svg><L d="M3.500 5V19M1 8H6M1 14H6" /><Flame /></Svg></Btn>
        <Btn><Svg><L d="M2 3.500H18M2 17.500H18" c="#e00000" /><path d="M2 12C5 2 8 4 10 10C12 16 15 16 18 6" stroke="#777" /></Svg></Btn>
        <Btn><Svg><L d="M2 3.500H18M2 17.500H18" c="#e00000" /><G t="金" y={14.500} c="#808000" /></Svg></Btn>
        <Btn><Svg><Fan t="J" c="#e00000" /></Svg></Btn>
        <Btn><Svg><Fan t="F" c="#e00000" /></Svg></Btn>
        <Btn><Svg><Fan t="金" c="#808000" /></Svg></Btn>
        <Btn><Svg><Fan t="神" c="#e00000" /></Svg></Btn>
        <Btn><Svg><Fan t="赢" c="#e00000" /></Svg></Btn>
        <Btn><Svg><Fan t="四" c="#e00000" /></Svg></Btn>
        <Sep className="ml-[7px] mr-[1px]" />
        <Btn><Svg><rect x="4.500" y="3.500" width="11" height="13" /><rect x="8" y="8" width="4" height="4" fill="#ffff00" stroke="none" /><L d="M2 8.500H18M2 12.500H18" c="#e00000" /><L d="M8.500 3V17M12.500 3V17" /></Svg></Btn>
        <Btn><Svg><L d="M3 2V17.500H18" /><L d="M3 14L8 7L12 11L17 4" c="#e00000" /></Svg></Btn>
        <Btn on><svg viewBox="0 0 18 18" className="w-[18px] h-[18px]"><circle cx="9" cy="9" r="8" fill="#ff2020" /><path d="M9 1A4 4 0 0 1 9 9A4 4 0 0 0 9 17A8 8 0 0 0 9 1Z" fill="#2080ff" /><circle cx="9" cy="5" r="1.500" fill="#ff2020" /><circle cx="9" cy="13" r="1.500" fill="#2080ff" /></svg></Btn>
        <Btn on><svg viewBox="0 0 18 12" className="w-[18px] h-3" fill="none" strokeWidth="2.500"><path d="M9 6C7 2 2 1 2 6C2 11 7 10 9 6" stroke="#e02020" /><path d="M9 6C11 2 16 1 16 6C16 11 11 10 9 6" stroke="#2088e0" /></svg></Btn>
      </div>

      {/* chart */}
      <div className="relative flex-1 bg-white">
        <Watermark />
        <Chart />
        <div className="relative flex items-start h-[14px] pt-[1px] border-b border-[#b4b4b4] ml-[72px] text-[9px] leading-[12px] text-[#a0a0a0] font-['Liberation_Sans']">
          <span className="w-[52.500px] shrink-0 pl-[1px]">01-26</span>
          {dates.map((d) => (
            <span key={d} className="w-[65.100px] shrink-0 pl-[1px]">{d}</span>
          ))}
          <span className="shrink-0 pl-[1px]">03-14</span>
        </div>
        <span className="absolute left-[5px] top-[4px] text-[12px] leading-[14px] text-[#0000ff]">周K线</span>
        <div className="relative flex pl-[72px] pr-[3px] text-[13px] leading-[15px]">
          <span className="text-black">老子十二宫结构</span>
          <span className="ml-auto flex gap-[8px] text-[#0000ff] text-[12.500px]"><span>000001</span><span>上证指数</span></span>
        </div>
        <div className="absolute left-[16px] top-[453px] text-[10px] leading-none text-[#333] font-['Liberation_Mono']">2440.9099</div>
        <div className="absolute left-[9.500px] top-[480px] text-[10px] leading-none text-[#333] font-['Liberation_Mono']">2239751210</div>
        <div className="absolute left-[9.500px] top-[499px] text-[10px] leading-none text-[#333] font-['Liberation_Mono']">1493167473</div>
        <div className="absolute left-[16px] top-[518px] text-[10px] leading-none text-[#333] font-['Liberation_Mono']">746583737</div>
        <div className="absolute left-[2px] top-[526px] w-[24px] h-[16px] bg-[#f0f0f0] border-r-2 border-b-2 border-[#808080] flex items-center justify-center">
          <svg viewBox="0 0 12 10" className="w-3 h-[10px]"><path d="M6 1L11 9H1Z" fill="#fff" stroke="#304080" /></svg>
        </div>
        <div className="absolute right-[1px] top-[460px] flex flex-col gap-[6px]">
          {[
            "M5 4H13M5 9H13M3 14H15",
            "M5 5H13M3 13H15",
            "M3 9H15",
            "M4 9H14M13 6V12",
          ].map((d) => (
            <div key={d} className="w-[23px] h-[16px] bg-[#f0f0f0] border-r-2 border-b-2 border-[#808080] flex items-center justify-center">
              <svg viewBox="0 0 18 18" className="w-[14px] h-[14px]" fill="none" stroke="#000"><path d={d} /></svg>
            </div>
          ))}
        </div>
        <div className="absolute inset-x-0 bottom-0 h-[2px] bg-[#999999]" />
        <div className="absolute right-0 inset-y-0 w-[1px] bg-[#999999]" />
      </div>
      <div className="absolute left-0 top-[24px] bottom-0 w-[1px] bg-[#b9d1ea]" />
    </div>
  );
}

export default App;
